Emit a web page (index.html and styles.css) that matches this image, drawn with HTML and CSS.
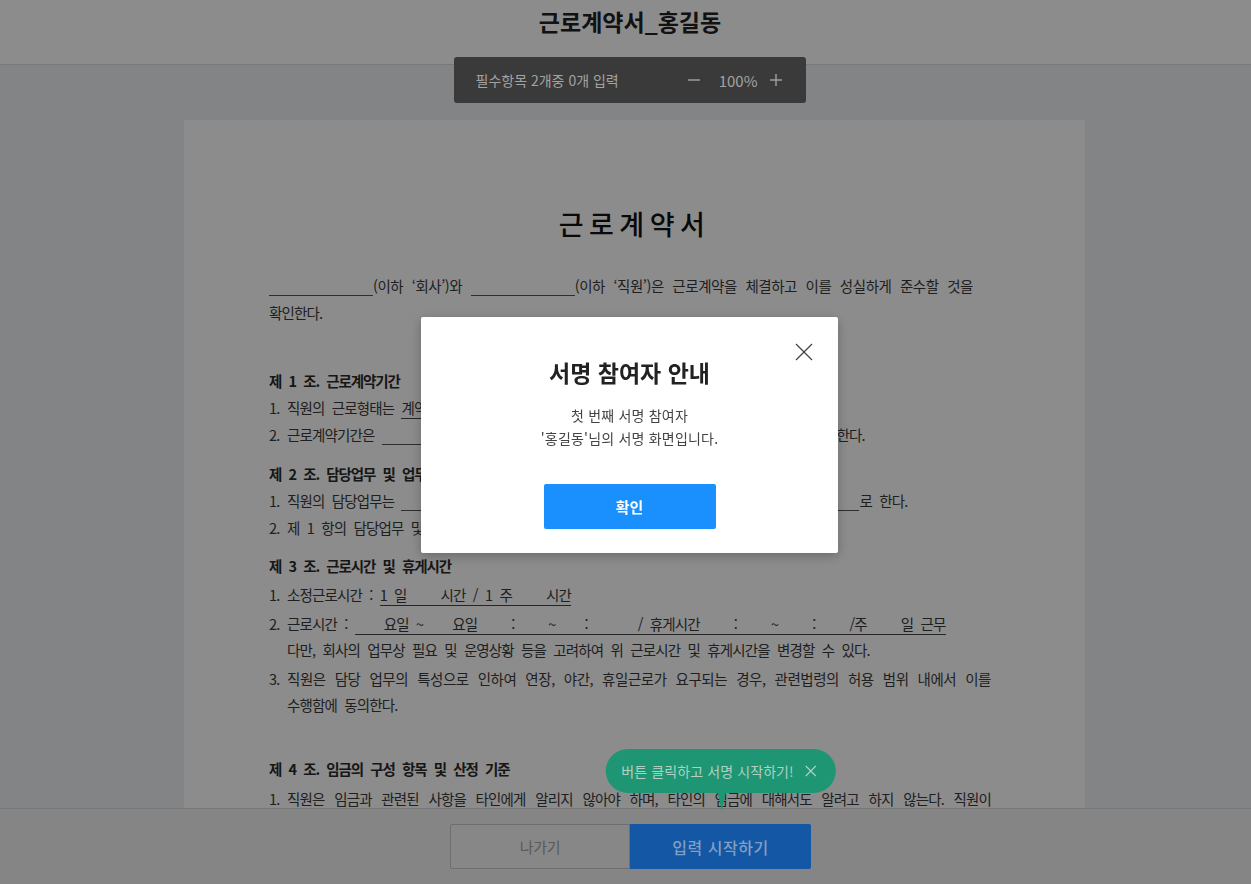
FILE: index.html
```html
<!DOCTYPE html>
<html lang="ko">

<head>
    <meta charset="UTF-8">
    <meta name="viewport" content="width=device-width, initial-scale=1.0">
    <title>근로계약서_홍길동</title>
    <link rel="stylesheet" href="styles.css">
</head>

<body>
    <div class="header">
        <h1 class="header-title">근로계약서_홍길동</h1>
        <div class="toolbar">
            <span>필수항목 2개중 0개 입력</span>
            <div class="zoom">
                <svg class="zoom-icon" viewBox="0 0 12 12"><line x1="0" y1="6" x2="12" y2="6" /></svg>
                <span class="zoom-value">100%</span>
                <svg class="zoom-icon" viewBox="0 0 12 12"><line x1="0" y1="6" x2="12" y2="6" /><line x1="6" y1="0" x2="6" y2="12" /></svg>
            </div>
        </div>
    </div>

    <div class="main">
        <div class="paper">
            <h2 class="doc-title">근로계약서</h2>
            <div class="intro">
                <p class="jl loose"><span class="blank w104"></span>(이하 ‘회사’)와 <span class="blank w104"></span>(이하 ‘직원’)은 근로계약을 체결하고 이를 성실하게 준수할 것을</p>
                <p>확인한다.</p>
            </div>

            <div class="sec sec1">
                <p class="sec-title">제 1 조. 근로계약기간</p>
                <div class="item"><span class="num">1.</span><p>직원의 근로형태는 <span class="ul">계약직</span>으로 한다.</p></div>
                <div class="item"><span class="num">2.</span><p>근로계약기간은 <span class="blank w410"></span>까지로 한다.</p></div>
            </div>

            <div class="sec sec2">
                <p class="sec-title">제 2 조. 담당업무 및 업무장소</p>
                <div class="item"><span class="num">1.</span><p>직원의 담당업무는 <span class="blank w458"></span>로 한다.</p></div>
                <div class="item"><span class="num">2.</span><p>제 1 항의 담당업무 및 업무장소는 회사 사정에 따라 변경될 수 있다.</p></div>
            </div>

            <div class="sec sec3">
                <p class="sec-title">제 3 조. 근로시간 및 휴게시간</p>
                <div class="item"><span class="num">1.</span><p>소정근로시간 : <span class="ul">1 일<i class="sp"></i>시간 / 1 주<i class="sp"></i>시간</span></p></div>
                <div class="item"><span class="num">2.</span><p>근로시간 : <span class="ul"><i class="sp-s"></i>요일 ~<i class="sp-s"></i>요일<i class="sp"></i>:<i class="sp"></i>~<i class="sp-s"></i>:<i class="sp-l"></i>/ 휴게시간<i class="sp"></i>:<i class="sp"></i>~<i class="sp"></i>:<i class="sp"></i>/주<i class="sp"></i>일 근무</span><br>다만, 회사의 업무상 필요 및 운영상황 등을 고려하여 위 근로시간 및 휴게시간을 변경할 수 있다.</p></div>
                <div class="item"><span class="num">3.</span>
                    <div class="body">
                        <p class="jl loose">직원은 담당 업무의 특성으로 인하여 연장, 야간, 휴일근로가 요구되는 경우, 관련법령의 허용 범위 내에서 이를</p>
                        <p>수행함에 동의한다.</p>
                    </div>
                </div>
            </div>

            <div class="sec sec4">
                <p class="sec-title">제 4 조. 임금의 구성 항목 및 산정 기준</p>
                <div class="item"><span class="num">1.</span>
                    <div class="body">
                        <p class="jl">직원은 임금과 관련된 사항을 타인에게 알리지 않아야 하며, 타인의 임금에 대해서도 알려고 하지 않는다. 직원이</p>
                        <p>이를 위반할 경우 회사는 직원에게 불이익을 줄 수 있다.</p>
                    </div>
                </div>
                <div class="item"><span class="num">2.</span><p>임금은 기본급과 제수당으로 구성되며, 세부 항목은 아래와 같다.</p></div>
            </div>
        </div>
    </div>

    <div class="footer">
        <button class="btn-exit">나가기</button>
        <div class="start-wrap">
            <div class="tip">
                <span>버튼 클릭하고 서명 시작하기!</span>
                <svg class="tip-close" viewBox="0 0 12 12"><line x1="1" y1="1" x2="11" y2="11" /><line x1="11" y1="1" x2="1" y2="11" /></svg>
            </div>
            <button class="btn-start">입력 시작하기</button>
        </div>
    </div>

    <div class="overlay">
        <div class="modal">
            <svg class="modal-close" viewBox="0 0 18 18"><line x1="1" y1="1" x2="17" y2="17" /><line x1="17" y1="1" x2="1" y2="17" /></svg>
            <h3 class="modal-title">서명 참여자 안내</h3>
            <p class="modal-text">첫 번째 서명 참여자<br>'홍길동'님의 서명 화면입니다.</p>
            <button class="modal-btn">확인</button>
        </div>
    </div>
</body>
</html>
```

FILE: styles.css
```css
* {
    margin: 0;
    padding: 0;
    box-sizing: border-box;
}
html,
body {
    height: 100%;
}
body {
    font-family: "Noto Sans CJK KR", "Noto Sans", sans-serif;
    background-color: #eef0f4;
    color: #333;
    display: flex;
    flex-direction: column;
    overflow: hidden;
}
button {
    font-family: inherit;
    cursor: pointer;
}

/* header */
.header {
    height: 65px;
    flex-shrink: 0;
    background-color: #fff;
    border-bottom: 1px solid #dcdcdc;
    display: flex;
    justify-content: center;
    padding: 5px 0 0 9px;
    position: relative;
}
.header-title {
    font-size: 23px;
    font-weight: 700;
    line-height: 32px;
    color: #222;
}
.toolbar {
    position: absolute;
    top: 57px;
    left: calc(50% - 172px);
    width: 352px;
    height: 46px;
    background-color: #3a3a3a;
    border-radius: 3px;
    display: flex;
    align-items: center;
    justify-content: space-between;
    padding: 0 24px 0 22px;
    color: #a3a3a3;
    font-size: 14px;
    z-index: 20;
}
.zoom {
    display: flex;
    align-items: center;
}
.zoom-icon {
    width: 12px;
    height: 12px;
    stroke: #a3a3a3;
    stroke-width: 1.4;
}
.zoom-value {
    font-size: 15px;
    margin: 0 12px 0 19px;
}

/* document */
.main {
    flex: 1;
    overflow: hidden;
    padding: 55px 0 0 18px;
}
.paper {
    width: 901px;
    min-height: 1200px;
    margin: 0 auto;
    background-color: #fff;
    padding: 84px 85px 60px;
    font-size: 14.5px;
    letter-spacing: -0.85px;
    word-spacing: 4.05px;
    white-space: nowrap;
    color: #3a3a3a;
}
.doc-title {
    text-align: center;
    font-size: 27px;
    font-weight: 500;
    line-height: 40px;
    letter-spacing: 5.5px;
    word-spacing: 0;
    color: #111;
}
.intro {
    width: 704px;
    margin-top: 28px;
    line-height: 27px;
}
.jl {
    white-space: normal;
    text-align: justify;
    text-align-last: justify;
}
.loose {
    letter-spacing: -0.45px;
    word-spacing: 3.65px;
}
.blank {
    display: inline-block;
    border-bottom: 1px solid #555;
    vertical-align: -4px;
    height: 1px;
}
.w104 {
    width: 104px;
}
.w410 {
    width: 410px;
}
.w458 {
    width: 458px;
}
.ul {
    border-bottom: 1px solid #444;
}
.sp,
.sp-s,
.sp-l {
    display: inline-block;
    width: 34px;
}
.sp-s {
    width: 29px;
}
.sp-l {
    width: 50px;
}
.sec1 {
    margin-top: 42px;
}
.sec2 {
    margin-top: 13px;
}
.sec3 {
    margin-top: 12px;
}
.sec4 {
    margin-top: 38px;
}
.sec-title {
    font-weight: 700;
    line-height: 26px;
    letter-spacing: -1.1px;
    word-spacing: 4.3px;
    color: #2a2a2a;
}
.item {
    display: flex;
    line-height: 26px;
    margin-top: 1px;
}
.item > p,
.body {
    width: 704px;
}
.sec3 .sec-title {
    margin-bottom: 2px;
}
.sec3 .item {
    margin-top: 3px;
}
.sec4 .sec-title {
    margin-bottom: 4px;
}
.num {
    width: 18px;
    flex-shrink: 0;
}

/* footer */
.footer {
    height: 76px;
    flex-shrink: 0;
    border-top: 1px solid #777;
    background-color: #858585;
    display: flex;
    justify-content: center;
    padding: 15px 0 0 10px;
    position: relative;
    z-index: 20;
}
.btn-exit,
.btn-start {
    height: 45px;
    font-size: 15px;
}
.btn-exit {
    width: 180px;
    background-color: #878787;
    border: 1px solid #6e6e6e;
    border-radius: 2px 0 0 2px;
    color: #5a5a5a;
    letter-spacing: -0.3px;
}
.start-wrap {
    position: relative;
}
.btn-start {
    width: 181px;
    background-color: #1357a5;
    border: none;
    border-radius: 0 2px 2px 0;
    color: #819fc3;
    font-size: 16px;
    font-weight: 500;
    letter-spacing: 0.5px;
}
.tip {
    position: absolute;
    bottom: calc(100% + 31px);
    left: 50%;
    transform: translateX(-50%);
    height: 44px;
    padding: 0 19px 0 16px;
    border-radius: 22px;
    background-color: #1e9673;
    color: #b0d0c4;
    font-size: 14px;
    letter-spacing: 0.1px;
    display: flex;
    align-items: center;
    gap: 11px;
    white-space: nowrap;
}
.tip::after {
    content: "";
    position: absolute;
    top: 100%;
    left: 50%;
    margin-left: -3px;
    border-left: 4px solid transparent;
    border-right: 4px solid transparent;
    border-top: 18px solid #1e9673;
}
.tip-close {
    width: 12px;
    height: 12px;
    stroke: #b0d0c4;
    stroke-width: 1.2;
}

/* modal */
.overlay {
    position: fixed;
    top: 0;
    left: 0;
    right: 0;
    bottom: 0;
    background-color: rgba(0, 0, 0, 0.45);
    z-index: 10;
    display: flex;
    align-items: center;
    justify-content: center;
    padding: 0 0 14px 8px;
}
.modal {
    width: 417px;
    height: 236px;
    background-color: #fff;
    border-radius: 2px;
    box-shadow: 0 3px 12px rgba(0, 0, 0, 0.25);
    position: relative;
    padding-top: 39px;
    text-align: center;
}
.modal-close {
    position: absolute;
    top: 26px;
    right: 25px;
    width: 18px;
    height: 18px;
    stroke: #444;
    stroke-width: 1.3;
}
.modal-title {
    font-size: 23px;
    font-weight: 700;
    line-height: 32px;
    color: #222;
}
.modal-text {
    margin-top: 16px;
    font-size: 14px;
    line-height: 23px;
    letter-spacing: 0.2px;
    color: #444;
}
.modal-btn {
    margin-top: 34px;
    width: 172px;
    height: 45px;
    background-color: #1a90ff;
    border: none;
    border-radius: 2px;
    color: #fff;
    font-size: 15px;
    font-weight: 700;
}
```
